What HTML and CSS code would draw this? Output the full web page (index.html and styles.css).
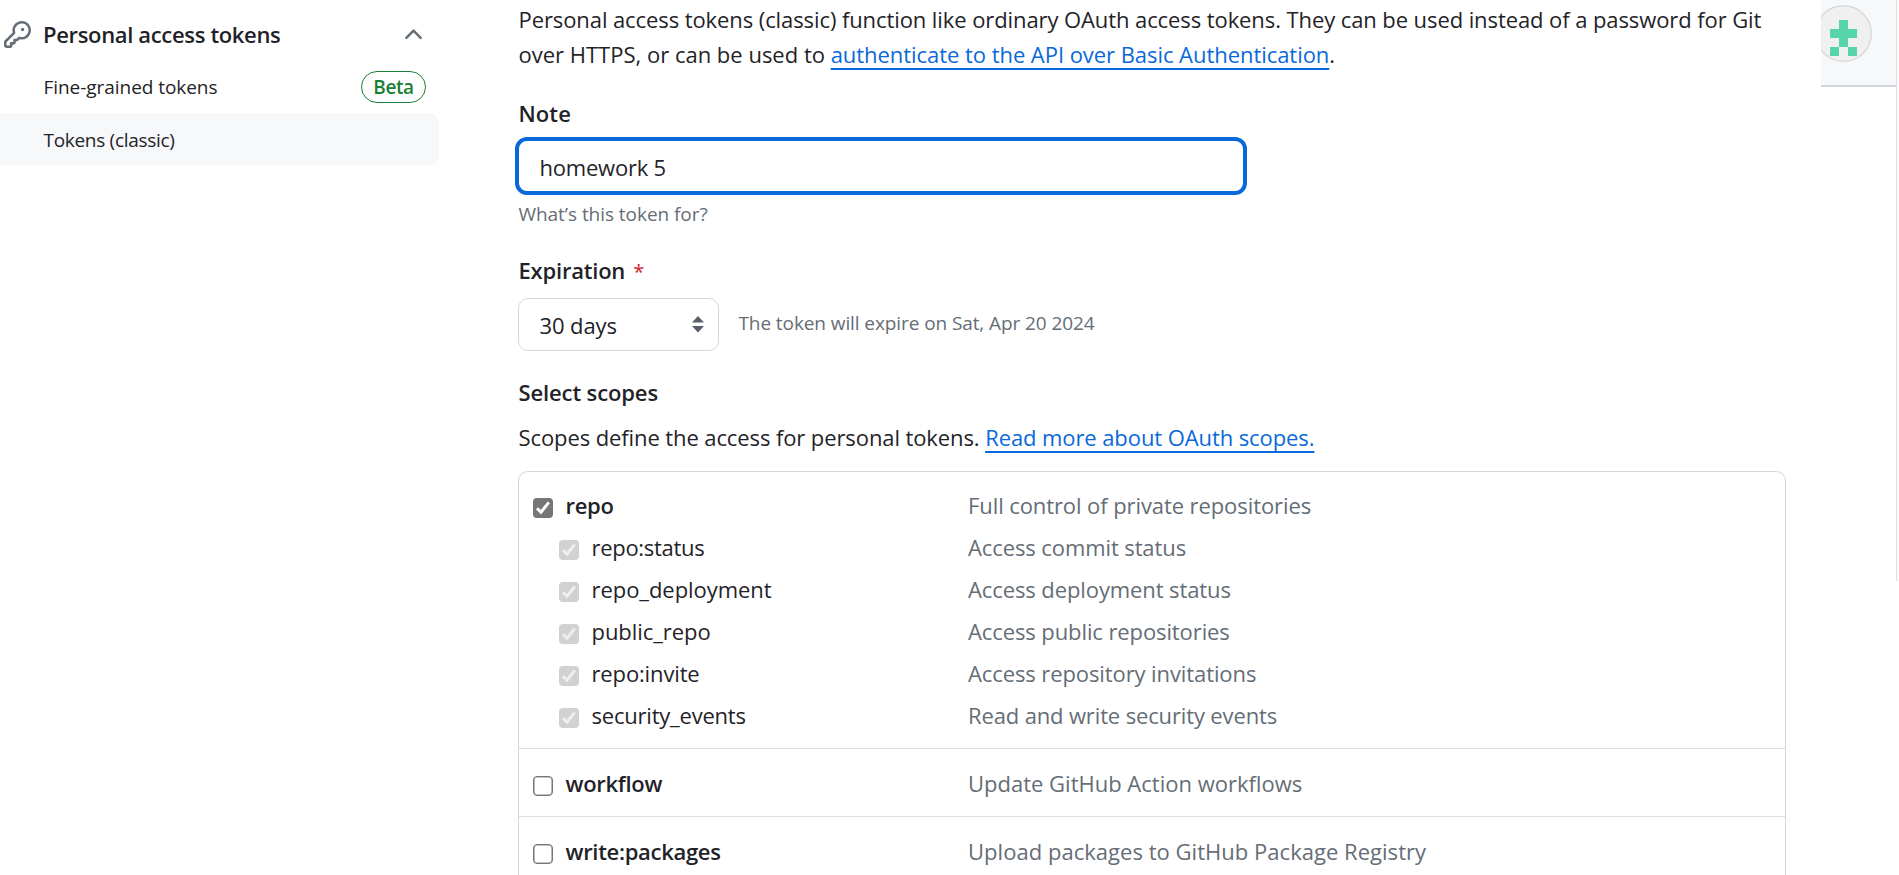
FILE: index.html
```
<!DOCTYPE html>
<html lang="en">
<head>
<meta charset="utf-8">
<title>New personal access token (classic)</title>
<link rel="stylesheet" href="styles.css">
</head>
<body>
<svg class="defs" width="0" height="0" aria-hidden="true">
  <symbol id="tick" viewBox="0 0 20 20"><path d="M4 10.2 8 14.2 15.8 4.4" fill="none" stroke="currentColor" stroke-width="3"/></symbol>
</svg>
<div class="page">
  <nav class="sidebar">
    <div class="nav-head">
      <svg class="icon" viewBox="0 0 16 16"><path d="M10.5 0a5.499 5.499 0 1 1-1.288 10.848l-.932.932a.749.749 0 0 1-.53.22H7v.75a.749.749 0 0 1-.22.53l-.5.5a.749.749 0 0 1-.53.22H5v.75a.749.749 0 0 1-.22.53l-.5.5a.749.749 0 0 1-.53.22h-2A1.75 1.75 0 0 1 0 14.25v-2c0-.199.079-.389.22-.53l4.932-4.932A5.5 5.5 0 0 1 10.5 0Zm-4 5.5c-.001.431.069.86.205 1.269a.75.75 0 0 1-.181.768L1.5 12.56v1.69c0 .138.112.25.25.25h1.69l.06-.06v-1.19a.75.75 0 0 1 .75-.75h1.19l.06-.06v-1.19a.75.75 0 0 1 .75-.75h1.19l1.023-1.025a.75.75 0 0 1 .768-.18A4 4 0 1 0 6.5 5.5ZM11 6a1 1 0 1 1 0-2 1 1 0 0 1 0 2Z"/></svg>
      <span class="nav-title">Personal access tokens</span>
      <svg class="icon" viewBox="0 0 16 16"><path d="M3.22 10.53a.749.749 0 0 1 0-1.06l4.25-4.25a.749.749 0 0 1 1.06 0l4.25 4.25a.749.749 0 1 1-1.06 1.06L8 6.811 4.28 10.53a.749.749 0 0 1-1.06 0Z"/></svg>
    </div>
    <div class="nav-item"><span class="t5">Fine-grained tokens</span><span class="beta">Beta</span></div>
    <div class="nav-item selected"><span class="t30">Tokens (classic)</span></div>
  </nav>

  <main class="content">
    <p class="intro"><span class="t8">Personal access tokens (classic) function like ordinary OAuth access tokens. They can be used instead of a password for Git</span><br><span class="t0">over HTTPS, or can be used to <a class="link t5" href="#">authenticate to the API over Basic Authentication</a>.</span></p>

    <label class="label note-label">Note</label>
    <div class="input t22">homework 5</div>
    <p class="hint t5">What’s this token for?</p>

    <label class="label exp-label"><span class="t22">Expiration</span><span class="required">*</span></label>
    <div class="exp-row">
      <div class="select t10">
        <span>30 days</span>
        <svg class="arrows" viewBox="0 0 12 17"><path d="M6 0 12 6.5H0ZM0 10h12L6 16.5Z"/></svg>
      </div>
      <span class="expires t8">The token will expire on Sat, Apr 20 2024</span>
    </div>

    <h2 class="label scopes-label">Select scopes</h2>
    <p class="scopes-intro"><span class="t10">Scopes define the access for personal tokens. </span><a class="link t8" href="#">Read more about OAuth scopes.</a></p>

    <ul class="scopes">
      <li class="group">
        <div class="row top"><span class="box on"><svg><use href="#tick"/></svg></span><span class="name t30">repo</span><span class="desc t8">Full control of private repositories</span></div>
        <div class="row sub"><span class="box off"><svg><use href="#tick"/></svg></span><span class="name t30">repo:status</span><span class="desc t10">Access commit status</span></div>
        <div class="row sub"><span class="box off"><svg><use href="#tick"/></svg></span><span class="name t5">repo_deployment</span><span class="desc t10">Access deployment status</span></div>
        <div class="row sub"><span class="box off"><svg><use href="#tick"/></svg></span><span class="name t5">public_repo</span><span class="desc t10">Access public repositories</span></div>
        <div class="row sub"><span class="box off"><svg><use href="#tick"/></svg></span><span class="name t15">repo:invite</span><span class="desc t10">Access repository invitations</span></div>
        <div class="row sub"><span class="box off"><svg><use href="#tick"/></svg></span><span class="name t22">security_events</span><span class="desc t15">Read and write security events</span></div>
      </li>
      <li class="group">
        <div class="row top"><span class="box"></span><span class="name t30">workflow</span><span class="desc t0">Update GitHub Action workflows</span></div>
      </li>
      <li class="group">
        <div class="row top"><span class="box"></span><span class="name t30">write:packages</span><span class="desc loose">Upload packages to GitHub Package Registry</span></div>
      </li>
    </ul>
  </main>

  <aside class="edge">
    <div class="header-piece">
      <svg class="avatar" viewBox="0 0 75 85">
        <circle cx="22.5" cy="33.5" r="27.8" fill="#f0f0f0" stroke="#d8dadd" stroke-width="1.5"/>
        <path fill="#57d5a8" d="M18 20h9v9h9v9h-9v9h-9v-9H9v-9h9ZM9 47h9v9H9ZM27 47h9v9h-9Z"/>
      </svg>
    </div>
    <div class="scroll-track"></div>
  </aside>
</div>
</body>
</html>
```
FILE: styles.css
```
* { box-sizing: border-box; }

body {
  margin: 0;
  background: #fff;
  color: #1f2328;
  font: 22px/35px "Open Sans", "Noto Sans", sans-serif;
}

p, h2, ul { margin: 0; padding: 0; }

.defs { display: block; position: absolute; }

.page {
  display: grid;
  grid-template-columns: 439px 1fr 78px;
  height: 875px;
  overflow: hidden;
}

/* letter tracking steps */
.t0 { letter-spacing: 0; }
.t5 { letter-spacing: -0.05px; }
.t8 { letter-spacing: -0.09px; }
.t10 { letter-spacing: -0.1px; }
.t15 { letter-spacing: -0.14px; }
.t22 { letter-spacing: -0.21px; }
.t30 { letter-spacing: -0.3px; }
.loose { letter-spacing: 0.03px; }

/* sidebar */
.nav-head {
  display: flex;
  align-items: center;
  height: 60px;
  padding: 8px 12px 0 3.5px;
}
.icon { width: 27px; height: 27px; fill: #656d76; flex: none; }
.nav-title {
  margin-left: 12.5px;
  flex: 1;
  font-weight: 600;
  letter-spacing: -0.34px;
}
.nav-item {
  display: flex;
  align-items: center;
  justify-content: space-between;
  height: 53px;
  padding: 0 13px 0 43.5px;
  font-size: 19px;
  line-height: 35px;
}
.nav-item > span:first-child { padding-top: 2px; }
.selected { background: #f6f8fa; border-radius: 0 10px 10px 0; }
.beta {
  width: 65px;
  height: 32px;
  border: 1px solid #1a7f37;
  border-radius: 16px;
  color: #1a7f37;
  font-weight: 600;
  letter-spacing: -0.4px;
  line-height: 30px;
  text-align: center;
}

/* form */
.content { padding: 2px 0 0 79.5px; }
.intro { white-space: nowrap; }
.link {
  color: #0969da;
  text-decoration: underline;
  text-decoration-thickness: 2px;
  text-decoration-skip-ink: none;
  text-underline-offset: 5px;
}
.label { display: block; font-size: 22px; font-weight: 600; }
.note-label { margin-top: 24px; letter-spacing: 0.1px; }
.input {
  width: 732px;
  height: 58px;
  margin: 6.4px 0 0 -3.5px;
  padding-left: 20.5px;
  border: 4px solid #0969da;
  border-radius: 12px;
  line-height: 52px;
}
.hint { margin-top: 1.6px; font-size: 19px; color: #656d76; }
.exp-label { margin-top: 21px; }
.required { margin-left: 8px; color: #cf222e; font-size: 20px; font-weight: 400; line-height: 1; }
.exp-row { display: flex; align-items: flex-start; margin-top: 10px; margin-left: -0.5px; }
.select {
  display: flex;
  justify-content: space-between;
  width: 201px;
  height: 53px;
  padding: 0 14px 0 20.5px;
  border: 1px solid #d0d7de;
  border-radius: 10px;
  line-height: 52px;
}
.arrows { width: 12px; height: 17px; margin-top: 17px; fill: #57606a; }
.expires { margin-left: 19.5px; font-size: 19px; line-height: 50px; color: #656d76; }
.scopes-label { margin-top: 24px; letter-spacing: -0.12px; }
.scopes-intro { margin-top: 10px; white-space: nowrap; }

/* scope list */
.scopes {
  width: 1268px;
  height: 420px;
  margin-top: 16px;
  margin-left: -0.5px;
  border: 1px solid #d0d7de;
  border-radius: 10px;
  list-style: none;
}
.group { padding: 13px 14px 12px; border-bottom: 1px solid #d8dee4; }
.group:first-child { padding-bottom: 11px; }
.row {
  display: grid;
  grid-template-columns: 20px 402px 1fr;
  column-gap: 12.5px;
  height: 42px;
  line-height: 42px;
}
.sub { grid-template-columns: 20px 376px 1fr; padding-left: 26px; }
.group:first-child .row { line-height: 40px; }
.top .name { font-weight: 600; }
.desc { margin-left: -12px; color: #656d76; }
.box {
  display: block;
  width: 20px;
  height: 20px;
  margin-top: 13px;
  border: 1px solid #767676;
  border-radius: 4px;
  box-shadow: inset 0 0 0 0.6px #8a8a8a;
}
.group:not(:first-child) .box { margin-top: 14px; }
.box svg { display: block; width: 20px; height: 20px; }
.box.on { border: 0; box-shadow: none; background: #767676; color: #fff; }
.box.off { border: 0; box-shadow: none; background: #d1d1d1; color: #efefef; }

/* right edge */
.edge { display: grid; grid-template-columns: 75px 3px; align-items: start; }
.header-piece { height: 87px; background: #f6f8fa; border-bottom: 2px solid #d0d7de; }
.avatar { display: block; width: 75px; height: 85px; }
.scroll-track { height: 581px; background: #fafafa; border-left: 1px solid #dedede; }
```
